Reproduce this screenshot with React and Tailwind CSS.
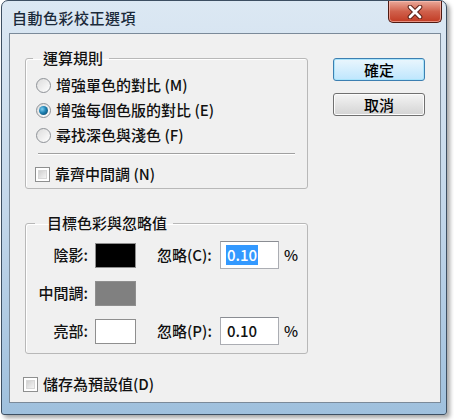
import React from 'react';

const font = { fontFamily: '"Noto Sans CJK TC", "Noto Sans", sans-serif' };

// Radio button, Vista style
const Radio = ({ checked }) => (
  <div className="w-[15px] h-[15px] rounded-full border border-[#8e9297] bg-gradient-to-br from-[#dcdcdc] to-[#ffffff] flex items-center justify-center shrink-0">
    {checked && (
      <div className="w-[9px] h-[9px] rounded-full bg-[radial-gradient(circle_at_35%_35%,#7fd0f2_0%,#1c7fb0_45%,#0b3e5c_100%)]" />
    )}
  </div>
);

const Checkbox = () => (
  <div className="w-[15px] h-[15px] border border-[#8e8f8f] bg-white p-[2px] shrink-0">
    <div className="w-full h-full bg-gradient-to-br from-[#d0d0d0] to-[#f4f4f4] border border-[#d8d8d8]" />
  </div>
);

const Button = ({ children, primary }) => (
  <button
    className={
      primary
        ? 'w-[92px] h-[23px] rounded-[3px] border border-[#3c7fb1] bg-gradient-to-b from-[#eaf6fd] to-[#bee6fd] shadow-[inset_0_0_0_1px_#a9e4fb] text-[15px] leading-none text-black font-medium'
        : 'w-[92px] h-[23px] rounded-[3px] border border-[#707070] bg-gradient-to-b from-[#f4f4f4] to-[#d4d4d4] shadow-[inset_0_0_0_1px_#fcfcfc] text-[15px] leading-none text-black font-medium'
    }
  >
    {children}
  </button>
);

const Swatch = ({ color }) => (
  <div className={`w-[41px] h-[25px] border border-[#8f8f8f] ${color}`} />
);

const Input = ({ selected }) => (
  <div className="w-[59px] h-[28px] border border-[#abadb3] border-t-[#8a8d93] bg-white flex items-center pl-[5px] text-[15px]">
    {selected ? (
      <span className="bg-[#3399ff] text-white px-[1px] leading-[20px]">0.10</span>
    ) : (
      <span className="leading-[20px] px-[1px]">0.10</span>
    )}
  </div>
);

function App() {
  return (
    <div className="w-[454px] h-[420px] bg-white relative overflow-hidden" style={font}>
      <div className="ml-[1px] w-[446px] h-[415px] rounded-t-[7px] rounded-b-[3px] border border-[#3d4f62] bg-gradient-to-b from-[#dce8f3] via-[#c3d7ea] to-[#9fc0dd] shadow-[3px_3px_4px_rgba(0,0,0,0.35)] flex flex-col relative">
        {/* title bar */}
        <div className="h-[32px] flex items-start justify-between">
          <div className="ml-[10px] mt-[7px] text-[15px] leading-[20px] text-[#1b2a3a] tracking-[0.5px] font-medium">自動色彩校正選項</div>
          <div className="mr-[4px] w-[54px] h-[22px] rounded-b-[5px] border border-t-0 border-[#4e1a12] bg-gradient-to-b from-[#e9a99a] via-[#d0604b] to-[#c13a22] shadow-[inset_0_0_0_1px_rgba(255,200,190,0.6)] flex items-center justify-center">
            <svg width="16" height="14" viewBox="0 0 16 14">
              <path d="M3 2 L13 12 M13 2 L3 12" stroke="#5a1e14" strokeWidth="4.6" strokeLinecap="round" />
              <path d="M3 2 L13 12 M13 2 L3 12" stroke="#ffffff" strokeWidth="2.8" strokeLinecap="round" />
            </svg>
          </div>
        </div>

        {/* client area */}
        <div className="ml-[7px] w-[432px] h-[370px] border border-[#7b8a99] bg-[#f0f0f0] flex text-[15px] text-[#111] font-medium">
          <div className="pl-[15px] pt-[14px] flex flex-col">
            <fieldset className="w-[283px] h-[141px] border border-[#b8b8b8] rounded-[3px] shadow-[inset_1px_1px_0_#ffffff] m-0 p-0 min-w-0">
              <legend className="ml-[7px] pl-[10px] pr-[6px] leading-[20px]">運算規則</legend>
              <div className="pt-[5px] pl-[10px] flex flex-col">
                <div className="h-[25px] flex items-center gap-[5px]">
                  <Radio />
                  <span>增強單色的對比 (M)</span>
                </div>
                <div className="h-[25px] flex items-center gap-[5px]">
                  <Radio checked />
                  <span>增強每個色版的對比 (E)</span>
                </div>
                <div className="h-[25px] flex items-center gap-[5px]">
                  <Radio />
                  <span>尋找深色與淺色 (F)</span>
                </div>
              </div>
              <div className="mt-[5px] ml-[12px] mr-[12px] h-[2px] border-t border-[#a0a0a0] border-b border-b-white" />
              <div className="mt-[7px] pl-[9px] h-[25px] flex items-center gap-[5px]">
                <Checkbox />
                <span>靠齊中間調 (N)</span>
              </div>
            </fieldset>

            <fieldset className="mt-[24px] w-[283px] border border-[#b8b8b8] rounded-[3px] shadow-[inset_1px_1px_0_#ffffff] m-0 p-0 min-w-0">
              <legend className="ml-[9px] pl-[12px] pr-[6px] leading-[20px]">目標色彩與忽略值</legend>
              <div className="pt-[8px] pb-[8px] flex flex-col gap-[10px]">
                <div className="h-[28px] flex items-center">
                  <span className="w-[62px] text-right">陰影:</span>
                  <div className="ml-[7px]"><Swatch color="bg-black" /></div>
                  <span className="ml-[21px] w-[63px]">忽略(C):</span>
                  <Input selected />
                  <span className="ml-[5px]">%</span>
                </div>
                <div className="h-[28px] flex items-center">
                  <span className="w-[62px] text-right">中間調:</span>
                  <div className="ml-[7px]"><Swatch color="bg-[#808080]" /></div>
                </div>
                <div className="h-[28px] flex items-center">
                  <span className="w-[62px] text-right">亮部:</span>
                  <div className="ml-[7px]"><Swatch color="bg-white" /></div>
                  <span className="ml-[21px] w-[63px]">忽略(P):</span>
                  <Input />
                  <span className="ml-[5px]">%</span>
                </div>
              </div>
            </fieldset>

            <div className="mt-[20px] -ml-[2px] h-[20px] flex items-center gap-[5px]">
              <Checkbox />
              <span>儲存為預設值(D)</span>
            </div>
          </div>

          <div className="ml-[25px] pt-[24px] flex flex-col gap-[12px]">
            <Button primary>確定</Button>
            <Button>取消</Button>
          </div>
        </div>
      </div>
    </div>
  );
}

export default App;
